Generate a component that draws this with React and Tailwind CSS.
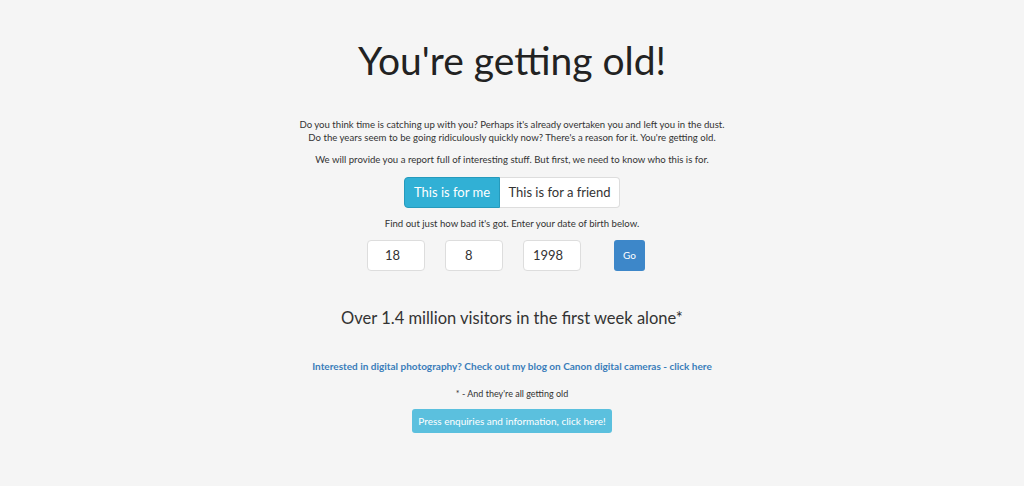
export default function App() {
  const font = { fontFamily: 'Lato, "Open Sans", sans-serif' };
  return (
    <div className="min-h-[486px] w-full bg-[#f5f5f5] text-[#333]" style={font}>
      <div className="flex flex-col items-center pt-[36px]">
        <h1 className="text-[39px] leading-[48px] text-[#222]">You're getting old!</h1>
        <div className="mt-[34px] text-center text-[9.6px] leading-[13px] text-[#333]">
          <p>Do you think time is catching up with you? Perhaps it's already overtaken you and left you in the dust.</p>
          <p>Do the years seem to be going ridiculously quickly now? There's a reason for it. You're getting old.</p>
        </div>
        <p className="mt-[9px] text-center text-[9.6px] leading-[13px]">We will provide you a report full of interesting stuff. But first, we need to know who this is for.</p>
        <div className="mt-[11px] flex">
          <button className="h-[31px] w-[96px] rounded-l-[4px] border border-[#269abc] bg-[#31b0d5] text-[13px] text-white">This is for me</button>
          <button className="h-[31px] w-[120px] rounded-r-[4px] border border-l-0 border-[#ddd] bg-white text-[13px] text-[#333]">This is for a friend</button>
        </div>
        <p className="mt-[9px] text-[9.6px] leading-[13px]">Find out just how bad it's got. Enter your date of birth below.</p>
        <div className="mt-[10px] flex items-center pr-[12px]">
          <div className="flex h-[31px] w-[58px] items-center rounded-[4px] border border-[#ddd] bg-white pl-[17px] text-[13px]">18</div>
          <div className="ml-[20px] flex h-[31px] w-[58px] items-center rounded-[4px] border border-[#ddd] bg-white pl-[19px] text-[13px]">8</div>
          <div className="ml-[20px] flex h-[31px] w-[58px] items-center rounded-[4px] border border-[#ddd] bg-white pl-[9px] text-[13px]">1998</div>
          <button className="ml-[33px] h-[31px] w-[31px] rounded-[3px] bg-[#3d87c9] text-[10px] text-white">Go</button>
        </div>
        <h2 className="mt-[34px] text-[16.5px] leading-[26px] text-[#333]">Over 1.4 million visitors in the first week alone*</h2>
        <a className="mt-[28px] text-[10px] font-bold leading-[14px] text-[#3a7dba]">Interested in digital photography? Check out my blog on Canon digital cameras - click here</a>
        <p className="mt-[15px] text-[9px] leading-[12px] text-[#333]">* - And they're all getting old</p>
        <button className="mt-[9px] h-[24px] w-[200px] rounded-[3px] bg-[#5bc0de] text-[10px] text-white">Press enquiries and information, click here!</button>
      </div>
    </div>
  );
}
